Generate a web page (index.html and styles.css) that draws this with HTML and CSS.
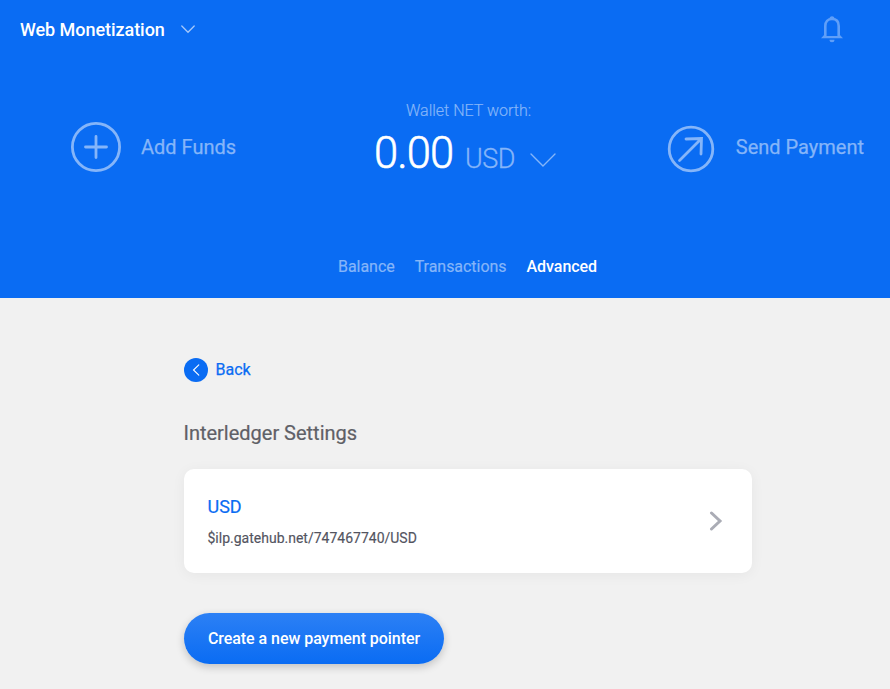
FILE: index.html
```html
<!DOCTYPE html>
<html lang="en">
<head>
<meta charset="utf-8">
<title>Web Monetization</title>
<link rel="stylesheet" href="styles.css">
</head>
<body>
<header class="hero">
  <div class="topbar">
    <div class="wallet"><span>Web Monetization</span>
      <svg width="14" height="9" viewBox="0 0 14 9"><path d="M.8 1 7 7.3 13.2 1"/></svg>
    </div>
    <svg class="bell" width="24" height="28" viewBox="0 0 24 28"><path d="M5.300 20.500V11c0-4.500 2.500-7 6.700-7s6.700 2.500 6.700 7v9.500"/><path class="solid" d="M1 23.200 4.500 19.500v1.500h15v-1.500l3.500 3.700zM9.500 4a2.500 2.700 0 0 1 5 0zM9.500 24.800h5a2.500 2.500 0 0 1-5 0z"/></svg>
  </div>
  <div class="actions">
    <div class="action add">
      <svg width="50" height="50" viewBox="0 0 50 50"><circle cx="25" cy="25" r="23.600"/><path d="M25 14.500v21M14.500 25h21"/></svg>
      <span>Add Funds</span>
    </div>
    <div class="worth">
      <div class="label">Wallet NET worth:</div>
      <div class="amount"><span class="value">0.00</span><span class="currency">USD</span>
        <svg width="26" height="14" viewBox="0 0 26 14"><path d="M1 1l12 12L25 1"/></svg>
      </div>
    </div>
    <div class="action send">
      <svg width="48" height="48" viewBox="0 0 48 48"><circle cx="24" cy="24" r="21.800"/><path d="M12.500 35.500 34.500 13.500M19 14l15.500-.500L34 29"/></svg>
      <span>Send Payment</span>
    </div>
  </div>
  <nav class="tabs"><a>Balance</a><a>Transactions</a><a class="active">Advanced</a></nav>
</header>
<main class="content">
  <a class="back"><svg width="24" height="24" viewBox="0 0 24 24"><circle cx="12" cy="12" r="12"/><path d="M14.800 6.800 9.500 12l5.300 5.200"/></svg><span>Back</span></a>
  <h1>Interledger Settings</h1>
  <section class="card">
    <div><h2>USD</h2><p>$ilp.gatehub.net/747467740/USD</p></div>
    <svg width="14" height="20" viewBox="0 0 14 20"><path d="M2.500 2 11 10l-8.500 8"/></svg>
  </section>
  <button class="create">Create a new payment pointer</button>
</main>
</body>
</html>
```
FILE: styles.css
```css
* { box-sizing: border-box; }
body { margin: 0; min-height: 100vh; background: #f1f1f1; font-family: Roboto, sans-serif; color: #5f6066; }
svg { display: block; fill: none; stroke: currentColor; flex: none; stroke-linecap: round; }
.hero { height: 298px; background: #0a6cf3; color: #85b5f9; }
.topbar { height: 58px; padding: 0 46px 0 20px; display: flex; align-items: center; justify-content: space-between; }
.wallet { display: flex; align-items: center; gap: 16px; color: #fff; font-size: 18px; font-weight: 500; letter-spacing: -.05px; }
.wallet svg { color: #a5c8fb; stroke-width: 1.300; }
.bell { stroke-width: 2.600; color: #609ff8; }
.bell .solid { fill: currentColor; stroke: none; }
.actions { height: 142px; padding: 2px 26px 0 71px; display: flex; align-items: flex-start; }
.action { display: flex; align-items: center; gap: 20px; font-size: 20px; line-height: 24px; -webkit-text-stroke: .25px; }
.action svg { stroke-width: 2.800; }
.add { width: 304px; margin-top: 62px; }
.send { margin: 65px 0 0 auto; gap: 21px; }
.send span { margin-top: -4px; }
.worth { margin-top: 40px; width: 187px; }
.label { text-align: center; font-size: 16px; line-height: 22px; font-weight: 300; -webkit-text-stroke: .2px; }
.amount { display: flex; align-items: baseline; padding-top: 1px; }
.value { width: 79px; font-size: 43.500px; line-height: 62px; font-weight: 300; letter-spacing: -.9px; margin-left: -1px; color: #fff; -webkit-text-stroke: .6px; }
.currency { width: 50px; margin-left: 12px; font-size: 27px; font-weight: 300; letter-spacing: -.5px; -webkit-text-stroke: .3px; }
.amount svg { margin: 0 0 18.500px 14.500px; stroke-width: 1.400; align-self: flex-end; }
.tabs { display: flex; gap: 20px; margin: 56px 0 0 338px; font-size: 16px; line-height: 22px; letter-spacing: -.04px; -webkit-text-stroke: .2px; }
.active { color: #fff; font-weight: 500; -webkit-text-stroke: 0; }
.content { width: 568px; margin: 60px 0 0 184px; }
.back { display: flex; align-items: center; gap: 7.500px; color: #0a6cf3; font-size: 16px; line-height: 24px; -webkit-text-stroke: .25px; }
.back circle { fill: #0a6cf3; stroke: none; }
.back path { stroke: #fff; stroke-width: 1.100; }
h1 { margin: 39px 0 24px -.500px; font-size: 20px; line-height: 24px; font-weight: 400; letter-spacing: -.01px; -webkit-text-stroke: .2px; }
.card { height: 104px; padding: 0 29px 0 23.500px; display: flex; align-items: center; justify-content: space-between; background: #fff; border-radius: 10px; box-shadow: 0 2px 14px rgba(0,0,0,.05); }
.card svg { color: #aaacb5; stroke-width: 3; }
h2 { margin: 0; color: #0a6cf3; font-size: 18px; line-height: 24px; font-weight: 400; -webkit-text-stroke: .2px; }
.card p { margin: 9px 0 0; color: #53545f; font-size: 14px; line-height: 20px; -webkit-text-stroke: .15px; }
.create { display: block; width: 260px; height: 51px; margin-top: 40px; padding: 0; border: 0; border-radius: 26px; background: linear-gradient(#2c80f5, #0a6cf3); color: #fff; font: 500 16px/24px Roboto, sans-serif; letter-spacing: -.05px; box-shadow: 0 3px 9px rgba(0,0,0,.2); }
```
